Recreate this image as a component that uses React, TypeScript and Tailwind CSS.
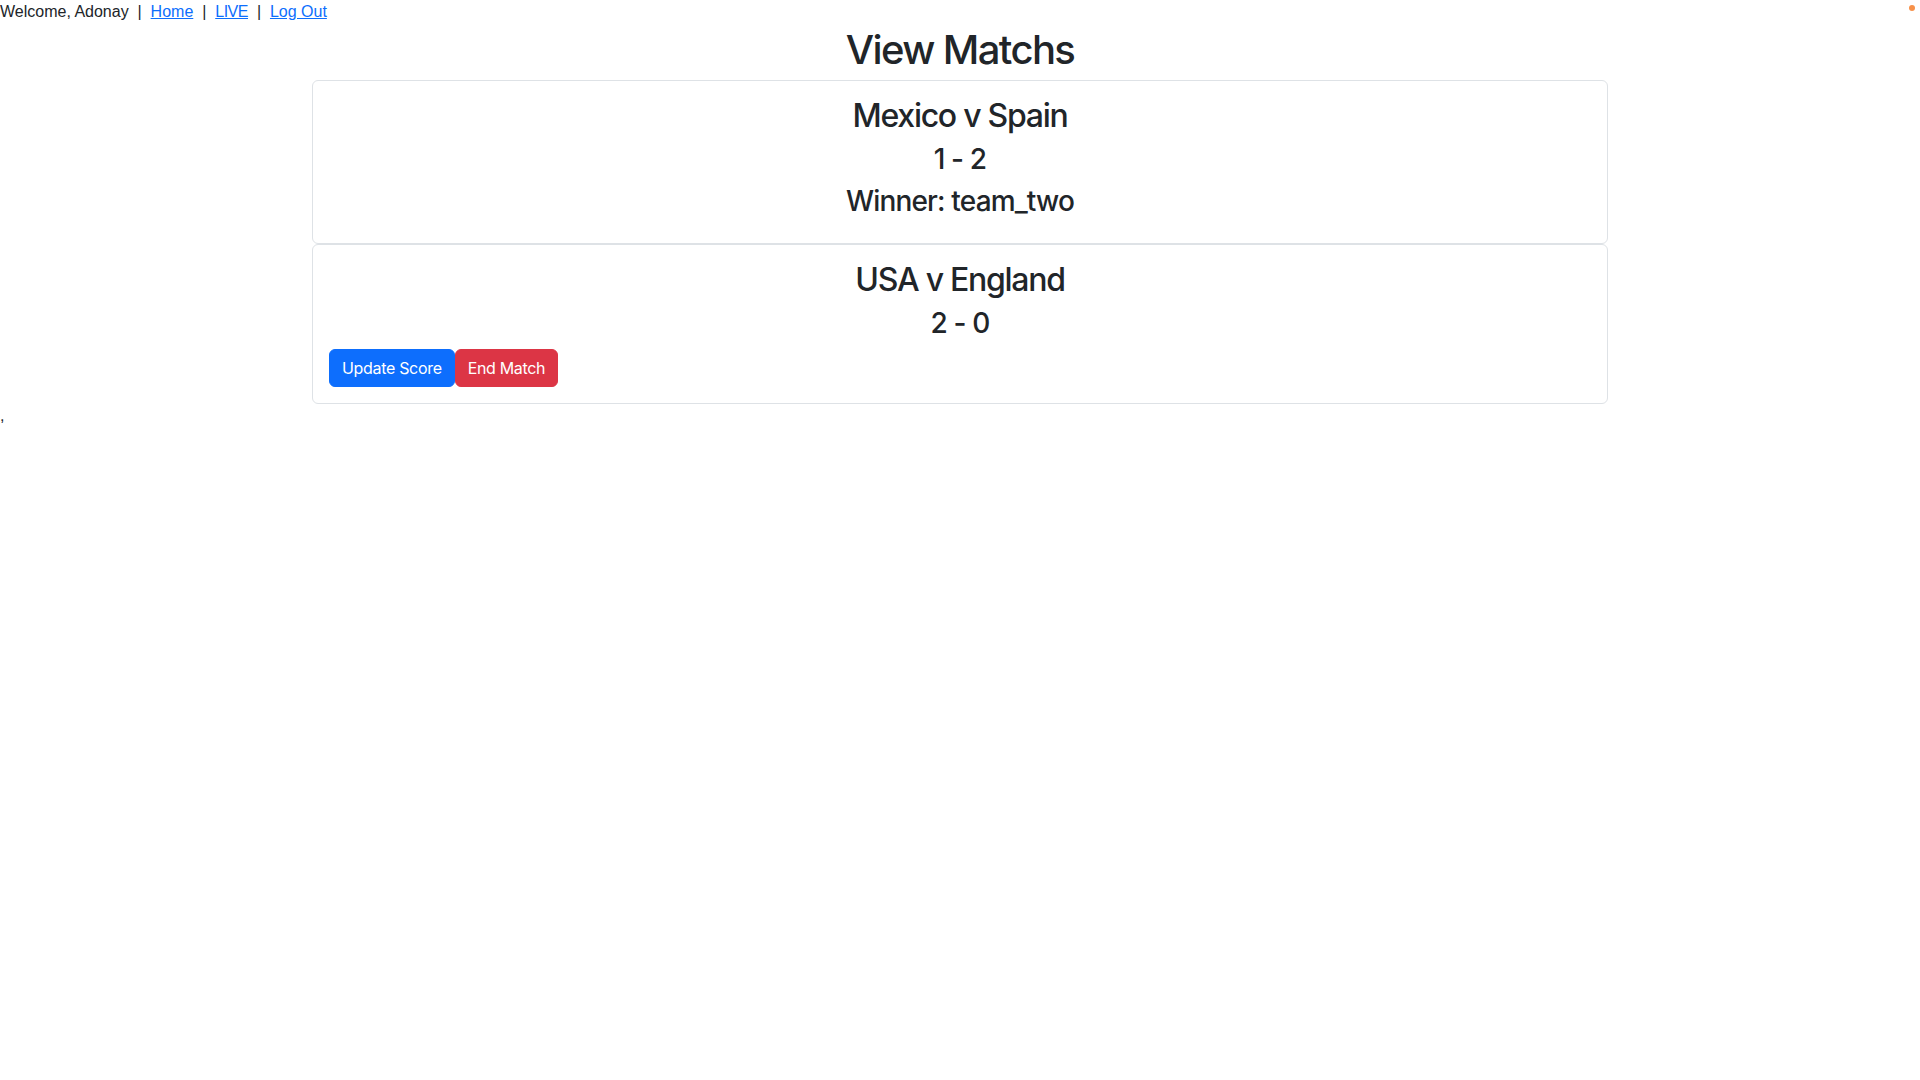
import React from "react";

type Match = {
    teamOne: string;
    teamTwo: string;
    scoreOne: number;
    scoreTwo: number;
    winner?: string;
};

const matches: Match[] = [
    { teamOne: "Mexico", teamTwo: "Spain", scoreOne: 1, scoreTwo: 2, winner: "team_two" },
    { teamOne: "USA", teamTwo: "England", scoreOne: 2, scoreTwo: 0 },
];

const Sep = () => <span className="whitespace-pre">{"\u00a0 | \u00a0"}</span>;

const MatchCard = ({ match }: { match: Match }) => (
    <div className="border border-[#dee2e6] rounded-[6px] bg-white">
        <div className="p-4 text-center">
            <h2 className="text-[32px] leading-[1.2] font-medium mb-2 tracking-[-0.04em]">
                {match.teamOne} v {match.teamTwo}
            </h2>
            <h3 className="text-[28px] leading-[1.2] font-medium mb-2 tracking-[-0.03em]">
                {match.scoreOne} - {match.scoreTwo}
            </h3>
            {match.winner ? (
                <h3 className="text-[28px] leading-[1.2] font-medium mb-2 tracking-[-0.03em]">Winner: {match.winner}</h3>
            ) : (
                <div className="flex">
                    <button className="bg-[#0d6efd] text-white text-base leading-6 px-3 py-[6px] rounded-[6px] border border-[#0d6efd] tracking-[-0.02em]">
                        Update Score
                    </button>
                    <button className="bg-[#dc3545] text-white text-base leading-6 px-3 py-[6px] rounded-[6px] border border-[#dc3545] tracking-[-0.02em]">
                        End Match
                    </button>
                </div>
            )}
        </div>
    </div>
);

export default function App() {
    return (
        <div className="relative min-h-screen bg-white text-[#212529] font-['Inter',sans-serif] leading-6">
            <div className="font-['Liberation_Sans',Arial,sans-serif] text-base leading-6 text-[#212529]">
                Welcome, Adonay
                <Sep />
                <a href="#" className="text-[#0d6efd] underline">Home</a>
                <Sep />
                <a href="#" className="text-[#0d6efd] underline tracking-[-0.03em]">LIVE</a>
                <Sep />
                <a href="#" className="text-[#0d6efd] underline">Log Out</a>
            </div>

            <h1 className="text-center text-[40px] leading-[1.2] font-medium tracking-[-0.04em] pt-[2px] mb-[6px]">View Matchs</h1>

            <div className="max-w-[1320px] mx-auto px-3">
                {matches.map((m) => (
                    <MatchCard key={m.teamOne} match={m} />
                ))}
            </div>
            <div className="font-['Liberation_Sans',Arial,sans-serif]">,</div>

            <span className="absolute top-[5px] right-[5px] w-[6px] h-[6px] rounded-full bg-[#f7914a]" />
        </div>
    );
}
